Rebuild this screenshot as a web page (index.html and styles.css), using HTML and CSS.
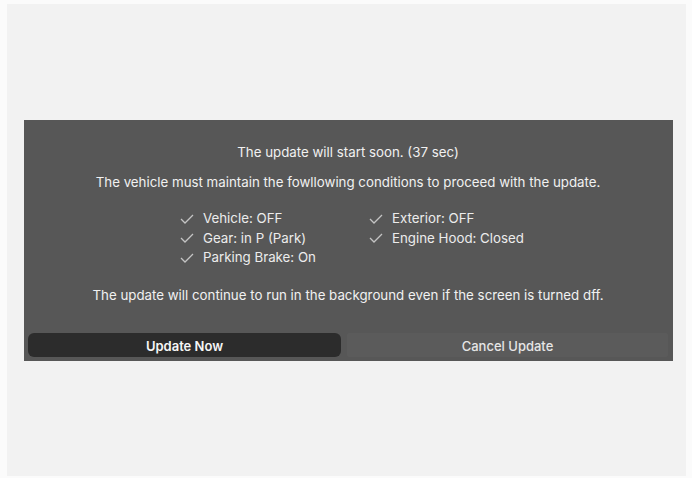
FILE: index.html
```html
<!DOCTYPE html>
<html lang="en">
<head>
<meta charset="utf-8">
<title>Update</title>
<link rel="stylesheet" href="styles.css">
</head>
<body>
<div class="panel">
  <div class="dialog">
    <p class="line first">The update will start soon. (37 sec)</p>
    <p class="line second">The vehicle must maintain the fowllowing conditions to proceed with the update.</p>
    <div class="conds">
      <div class="cond"><svg class="chk" viewBox="0 0 14 10"><polyline points="1,5 5,9 13,1"/></svg>Vehicle: OFF</div>
      <div class="cond"><svg class="chk" viewBox="0 0 14 10"><polyline points="1,5 5,9 13,1"/></svg>Exterior: OFF</div>
      <div class="cond"><svg class="chk" viewBox="0 0 14 10"><polyline points="1,5 5,9 13,1"/></svg>Gear: in P (Park)</div>
      <div class="cond"><svg class="chk" viewBox="0 0 14 10"><polyline points="1,5 5,9 13,1"/></svg>Engine Hood: Closed</div>
      <div class="cond"><svg class="chk" viewBox="0 0 14 10"><polyline points="1,5 5,9 13,1"/></svg>Parking Brake: On</div>
    </div>
    <p class="line note">The update will continue to run in the background even if the screen is turned dff.</p>
    <div class="buttons">
      <button class="btn primary">Update Now</button>
      <button class="btn secondary">Cancel Update</button>
    </div>
  </div>
</div>
</body>
</html>
```
FILE: styles.css
```css
html, body {
  margin: 0;
  padding: 0;
  background: #fbfbfb;
}
body {
  font-family: Inter, "Noto Sans", "Liberation Sans", sans-serif;
  padding: 4px 6px 2px 7px;
}
.panel {
  background: #f2f2f2;
  height: 472px;
  padding: 116px 12px 0 17px;
  box-sizing: border-box;
}
.dialog {
  background: #575757;
  width: 649px;
  box-sizing: border-box;
  padding: 22px 5px 4px 4px;
  color: #f1f1f1;
  font-size: 13.3px;
}
.line {
  margin: 0;
  line-height: 20px;
  text-align: center;
}
.second {
  margin-top: 10px;
}
.conds {
  margin: 17px 0 0 152px;
  display: grid;
  grid-template-columns: 189px auto;
  justify-content: start;
  row-gap: 0;
}
.cond {
  display: flex;
  align-items: center;
  line-height: 19.5px;
  color: #ececec;
}
.chk {
  width: 14px;
  height: 10px;
  margin-right: 9px;
  fill: none;
  stroke: #c4c4c4;
  stroke-width: 1.3;
}
.note {
  margin-top: 17px;
}
.buttons {
  display: flex;
  gap: 6px;
  margin-top: 28px;
}
.btn {
  font-family: inherit;
  font-size: 13px;
  height: 24px;
  border: none;
  padding: 0;
  padding-top: 2px;
  cursor: pointer;
}
.primary {
  width: 313px;
  background: #2c2c2c;
  color: #f6f6f6;
  font-weight: 600;
  border-radius: 6px;
}
.secondary {
  flex: 1;
  background: #5b5b5b;
  color: #e6e6e6;
  font-weight: 500;
  border-radius: 2px;
}
```
